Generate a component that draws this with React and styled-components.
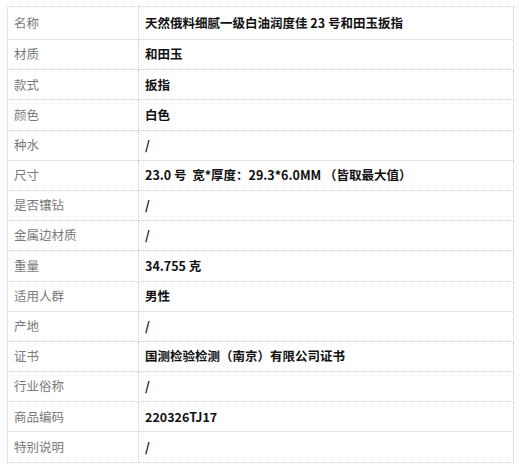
import React from "react";
import styled, { createGlobalStyle } from "styled-components";

const Global = createGlobalStyle`
  html, body { margin: 0; padding: 0; background: #fff; }
  body { font-family: "Microsoft YaHei", "Noto Sans CJK SC", "Noto Sans", sans-serif; }
`;

const Table = styled.div`
  box-sizing: border-box;
  width: 507px;
  margin: 6px 0 0 7px;
  border-top: 1px dotted #cccccc;
  border-left: 1px dotted #cccccc;
  display: grid;
  grid-template-columns: 131px 375px;
`;

const Cell = styled.div`
  box-sizing: border-box;
  height: ${(p) => (p.$first ? "33px" : "30.2px")};
  border-right: 1px dotted #cccccc;
  border-bottom: 1px dotted #cccccc;
  display: flex;
  align-items: center;
  font-size: 12.5px;
  line-height: 1;
  white-space: pre;
`;

const Label = styled(Cell)`
  padding-left: 6px;
  color: #7a7a7a;
`;

const Value = styled(Cell)`
  padding-left: 6px;
  color: #111;
  font-weight: 700;
`;

const rows = [
  ["名称", "天然俄料细腻一级白油润度佳 23 号和田玉扳指"],
  ["材质", "和田玉"],
  ["款式", "扳指"],
  ["颜色", "白色"],
  ["种水", "/"],
  ["尺寸", "23.0 号  宽*厚度：29.3*6.0MM （皆取最大值）"],
  ["是否镶钻", "/"],
  ["金属边材质", "/"],
  ["重量", "34.755 克"],
  ["适用人群", "男性"],
  ["产地", "/"],
  ["证书", "国测检验检测（南京）有限公司证书"],
  ["行业俗称", "/"],
  ["商品编码", "220326TJ17"],
  ["特别说明", "/"],
];

export default function App() {
  return (
    <>
      <Global />
      <Table>
        {rows.map(([k, v], i) => (
          <React.Fragment key={k}>
            <Label $first={i === 0}>{k}</Label>
            <Value $first={i === 0}>{v}</Value>
          </React.Fragment>
        ))}
      </Table>
    </>
  );
}
